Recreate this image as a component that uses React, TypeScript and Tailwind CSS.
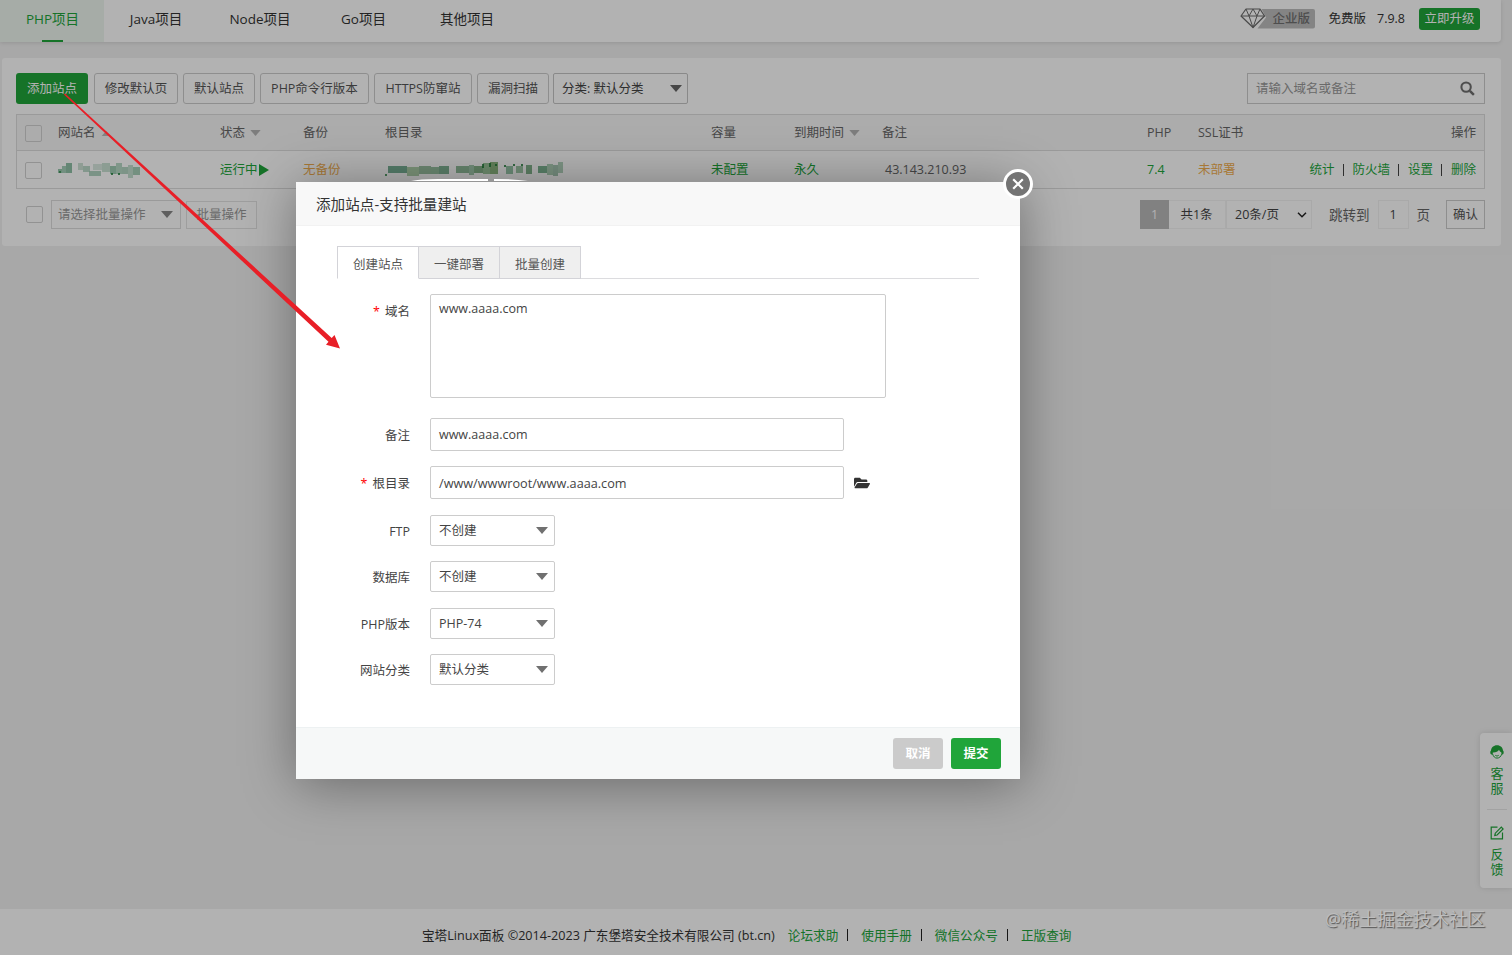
import React from 'react';
import { FaFolderOpen } from 'react-icons/fa';

const Caret = ({ className = '' }: { className?: string }) => (
  <svg viewBox="0 0 12 7" className={`h-[7px] w-3 shrink-0 ${className}`}>
    <path d="M0 0h12L6 7z" fill="currentColor" />
  </svg>
);

const Box = ({ className = '' }: { className?: string }) => (
  <span className={`block size-[17px] shrink-0 rounded-[2px] border border-[#d2d2d2] ${className}`} />
);

const nav = [
  { label: 'Java项目', width: 'w-[104px]' },
  { label: 'Node项目', width: 'w-[104px]' },
  { label: 'Go项目', width: 'w-[103px]' },
  { label: '其他项目', width: 'w-[104px]' },
];

const tools = [
  { label: '修改默认页', width: 'w-[84px] mr-[5px]' },
  { label: '默认站点', width: 'w-[72px] mr-[5px]' },
  { label: 'PHP命令行版本', width: 'w-[109px] mr-[5px]' },
  { label: 'HTTPS防窜站', width: 'w-[98px] mr-[5px]' },
  { label: '漏洞扫描', width: 'w-[72px] mr-[5px]' },
];

const columns = 'grid grid-cols-[41px_162px_83px_82px_326px_83px_88px_265px_51px_1fr_auto] items-center pt-px';

type Block = [number, number, number, number, string];

const nameBlocks: Block[] = [
  [0, 7, 4, 4, '#7fb99a'], [4, 4, 4, 7, '#8fc3a7'], [8, 1, 6, 10, '#74b291'], [20, 1, 5, 7, '#c0dacb'],
  [25, 4, 7, 6, '#abd0bb'], [31, 9, 12, 5, '#9cc8b0'], [35, 2, 9, 6, '#cfe3d8'], [44, 1, 8, 9, '#bcdac8'],
  [52, 4, 6, 8, '#86bd9f'], [58, 1, 6, 11, '#a5cfb7'], [64, 5, 6, 7, '#a0cbb3'], [70, 3, 5, 13, '#b4d6c3'],
  [75, 5, 7, 8, '#90c2a6'], [53, 11, 2, 2, '#1a7a34'], [60, 11, 2, 2, '#1a7a34'], [1, 9, 2, 2, '#2f8a4a'],
];

const pathBlocks: Block[] = [
  [0, 12, 2, 2, '#2f8a4a'], [3, 4, 19, 7, '#579f7d'], [22, 5, 12, 9, '#9ec898'], [34, 4, 12, 8, '#82b38b'],
  [46, 5, 8, 7, '#7fb48c'], [54, 4, 10, 8, '#63a27a'], [71, 4, 13, 7, '#76ae82'], [84, 3, 5, 10, '#8cbd9a'],
  [89, 4, 9, 7, '#6ba570'], [98, 1, 7, 11, '#83b984'], [105, 0, 8, 12, '#72a763'], [97, 2, 2, 4, '#1a7a34'],
  [104, 1, 2, 4, '#1a7a34'], [110, 2, 2, 2, '#1a7a34'], [119, 3, 2, 2, '#1a7a34'], [121, 4, 7, 8, '#80b995'],
  [131, 4, 7, 7, '#8abe94'], [128, 2, 2, 2, '#1a7a34'], [141, 3, 6, 9, '#66a273'], [136, 2, 2, 2, '#1a7a34'],
  [153, 4, 9, 7, '#5fa579'], [162, 2, 6, 11, '#9bc5a6'], [168, 3, 5, 11, '#92bba2'], [173, 0, 5, 11, '#a0c9ac'],
];

const Mosaic = ({ blocks, width }: { blocks: Block[]; width: number }) => (
  <svg width={width} height="17" viewBox={`0 0 ${width} 17`} className="block">
    {blocks.map(([x, y, w, h, fill], i) => (
      <rect key={i} x={x} y={y} width={w} height={h} fill={fill} opacity="0.8" />
    ))}
  </svg>
);

const Label = ({ text, required, className = '' }: { text: string; required?: boolean; className?: string }) => (
  <div className={`mr-5 flex w-[114px] shrink-0 items-center justify-end ${className}`}>
    {required && <span className="mr-[5px] text-[#f00]">*</span>}
    {text}
  </div>
);

const SelectRow = ({ label, value, className }: { label: string; value: string; className: string }) => (
  <div className={`flex h-[31px] ${className}`}>
    <Label text={label} className="pt-[3px]" />
    <div className="flex w-[125px] items-center justify-between rounded-[2px] border border-[#ccc] pr-[6px] pl-2">
      <span>{value}</span>
      <Caret className="text-[#707070]" />
    </div>
  </div>
);

const EnterpriseBadge = () => (
  <div className="relative mr-[13px] flex h-[21px] w-[75px] items-center">
    <svg viewBox="0 0 75 21" className="absolute inset-0 h-[21px] w-[75px]" fill="none" stroke="#6b6b6b" strokeWidth="1.200" strokeLinejoin="round">
      <path d="M17.500 20.500 26 9.500 21.500 1H73q2 0 2 2v15.500q0 2-2 2z" fill="#bdbdbd" stroke="none" />
      <path d="M6 1h14l4.500 7L13 19.500 1 8z" />
      <path d="M1 8h23.500M6 1l3 7 4 11.500M20 1l-3 7-4 11.500M9 8l4-7 4 7" strokeWidth="1" />
    </svg>
    <span className="relative pt-px pl-8 font-medium text-[#707070]">企业版</span>
  </div>
);

const Service = () => (
  <svg viewBox="0 0 14 14" className="size-[14px]">
    <path d="M7 .3C3.500.3 1.200 2.800 1 5.500 0 6 0 9 1.200 9.400h1.600V7.500c2.900.2 5.100-.9 6.200-2.700.6 1.400 1.400 2.400 2.400 2.700v1.900h1.400C14 9 14 6 13 5.500 12.800 2.800 10.500.3 7 .3z" fill="#20a53a" />
    <path d="M2.600 9c.8 2.600 2.300 4.100 4.400 4.100s4-1.400 4.600-3.900" stroke="#20a53a" strokeWidth="1" fill="none" />
    <path d="M5.300 10.300c1 .9 2.400.9 3.400 0" stroke="#20a53a" fill="none" />
  </svg>
);

const EditIcon = () => (
  <svg viewBox="0 0 14 14" className="size-[14px]" fill="none" stroke="#20a53a" strokeWidth="1.200">
    <path d="M7.500 1.200H1.200v11.600h11.300V6.500" />
    <path d="M4.800 9.500 5.300 7.200l6-6 1.800 1.800-6 6z" />
  </svg>
);

const Divider = () => <i className="mx-[8.500px] h-3 w-px bg-[#444]" />;
const FooterDivider = () => <i className="mr-[13px] ml-[9px] h-3 w-px bg-[#222]" />;

function Page() {
  return (
    <div className="flex h-full flex-col bg-[#f1f1f1]">
      <header className="mr-[11px] flex h-[42px] shrink-0 rounded-br-[4px] bg-white text-[13.500px] shadow-[0_1px_4px_rgba(0,0,0,0.12)]">
        <div className="flex w-[104px] flex-col items-center bg-[#eef6f0] text-[#20a53a]">
          <span className="flex h-10 items-center pb-[2px] pl-px">PHP项目</span>
          <span className="h-[2px] w-[21px] bg-[#20a53a]" />
        </div>
        {nav.map((n) => (
          <div key={n.label} className={`flex h-10 items-center justify-center pb-[2px] ${n.width}`}>{n.label}</div>
        ))}
        <div className="ml-auto flex h-[37px] items-center pr-[21px] text-[12.500px]">
          <EnterpriseBadge />
          <span className="mr-[11px] pt-px">免费版</span>
          <span className="mr-[14px] pt-px">7.9.8</span>
          <span className="flex h-[22px] w-[61px] items-center justify-center rounded-[3px] bg-[#20a53a] pt-px text-white">立即升级</span>
        </div>
      </header>

      <main className="mt-4 mr-[11px] ml-[2px] h-[188px] shrink-0 rounded-[3px] bg-white pt-[15px] pr-4 pl-[14px] text-[#666]">
        <div className="flex h-[31px]">
          <div className="mr-[6px] flex w-[72px] items-center justify-center rounded-[3px] bg-[#20a53a] pt-px text-white">添加站点</div>
          {tools.map((t) => (
            <div key={t.label} className={`flex items-center justify-center rounded-[3px] border border-[#ccc] pt-px text-[#555] ${t.width}`}>{t.label}</div>
          ))}
          <div className="-ml-px flex w-[135px] items-center justify-between rounded-[2px] border border-[#c4c4c4] pr-[5px] pl-2 text-[#444]">
            <span>分类: 默认分类</span>
            <Caret className="text-[#666]" />
          </div>
          <div className="ml-auto flex w-[238px] items-center justify-between border border-[#ccc] pr-[9px] pl-2 text-[#999]">
            <span>请输入域名或备注</span>
            <svg viewBox="0 0 16 16" className="size-[15px]" fill="none" stroke="#707070">
              <circle cx="6.500" cy="6.500" r="5" strokeWidth="2.200" />
              <path d="m10.500 10.500 4.300 4.300" strokeWidth="2.700" />
            </svg>
          </div>
        </div>

        <section className="mt-[10px] h-[75px] border border-[#ddd]">
          <div className={`h-[36px] border-b border-[#ddd] bg-[#f6f6f6] ${columns}`}>
            <Box className="ml-2" />
            <span className="flex items-center">网站名<Caret className="ml-[5px] !h-[5px] !w-[10px] rotate-180 text-[#bbb]" /></span>
            <span className="flex items-center">状态<Caret className="ml-[5px] !h-[6px] !w-[11px] text-[#b4b4b4]" /></span>
            <span>备份</span>
            <span>根目录</span>
            <span>容量</span>
            <span className="flex items-center">到期时间<Caret className="ml-[5px] !h-[6px] !w-[11px] text-[#b4b4b4]" /></span>
            <span>备注</span>
            <span>PHP</span>
            <span>SSL证书</span>
            <span className="pr-2">操作</span>
          </div>
          <div className={`h-[37px] text-[#20a53a] ${columns}`}>
            <Box className="ml-2" />
            <Mosaic blocks={nameBlocks} width={84} />
            <span className="flex items-center">运行中
              <svg viewBox="0 0 10 12" className="ml-px h-3 w-[10px]"><path d="M0 0v12l10-6z" fill="#20a53a" /></svg>
            </span>
            <span className="text-[#f0ad4e]">无备份</span>
            <Mosaic blocks={pathBlocks} width={180} />
            <span>未配置</span>
            <span>永久</span>
            <span className="pl-[3px] text-[#666]">43.143.210.93</span>
            <span>7.4</span>
            <span className="text-[#f0ad4e]">未部署</span>
            <div className="flex items-center pr-2">
              <span>统计</span><Divider />
              <span>防火墙</span><Divider />
              <span>设置</span><Divider />
              <span>删除</span>
            </div>
          </div>
        </section>

        <div className="mt-[11px] flex h-[29px] items-center">
          <Box className="mr-2 ml-[10px]" />
          <div className="mr-[5px] flex h-[29px] w-[130px] items-center justify-between border border-[#ddd] pr-[7px] pl-[6px] text-[#999]">
            <span>请选择批量操作</span><Caret className="text-[#888]" />
          </div>
          <div className="flex h-[28px] w-[71px] items-center justify-center border border-[#e2e2e2] text-[#999]">批量操作</div>
          <div className="ml-auto flex h-[29px] items-stretch text-[#444]">
            <span className="flex w-[29px] items-center justify-center bg-[#b9b9b9] text-white">1</span>
            <span className="flex w-[57px] items-center justify-center border-y border-r border-[#f4f4f4] pr-px">共1条</span>
            <span className="flex w-[86px] items-center justify-between border border-[#f2f2f2] pr-1 pl-2">20条/页
              <svg viewBox="0 0 10 6" className="h-[6px] w-[10px]"><path d="m1 .8 4 4 4-4" stroke="#222" strokeWidth="1.500" fill="none" /></svg>
            </span>
            <span className="flex items-center pr-2 pl-[17px] text-[13.500px] text-[#666]">跳转到</span>
            <span className="flex w-[31px] items-center justify-center border border-[#f2f2f2]">1</span>
            <span className="flex items-center px-2 text-[13.500px] text-[#666]">页</span>
            <span className="ml-2 flex w-[39px] items-center justify-center border border-[#ccc] text-[#555]">确认</span>
          </div>
        </div>
      </main>

      <footer className="mt-auto flex h-[46px] shrink-0 items-center bg-white pt-[6px] pl-[422px] text-[12.640px] text-[#333]">
        <span className="mr-[13px] whitespace-nowrap">宝塔Linux面板 ©2014-2023 广东堡塔安全技术有限公司 (bt.cn)</span>
        <span className="text-[#20a53a]">论坛求助</span><FooterDivider />
        <span className="text-[#20a53a]">使用手册</span><FooterDivider />
        <span className="text-[#20a53a]">微信公众号</span><FooterDivider />
        <span className="text-[#20a53a]">正版查询</span>
      </footer>

      <aside className="absolute top-[733px] right-0 flex h-[155px] w-8 flex-col items-center rounded-l-[4px] bg-white pt-3 pl-[2px] text-[13px] leading-[15px] text-[#20a53a] shadow-[0_0_6px_rgba(0,0,0,0.12)]">
        <Service />
        <span className="mt-[7px]">客</span>
        <span>服</span>
        <i className="mt-[13px] mb-4 h-px w-5 bg-[#e8e8e8]" />
        <EditIcon />
        <span className="mt-[7px]">反</span>
        <span>馈</span>
      </aside>
    </div>
  );
}

function Dialog() {
  return (
    <div className="absolute top-[182px] left-[296px] flex h-[597px] w-[724px] flex-col bg-white text-[#444] shadow-[1px_5px_50px_rgba(0,0,0,0.38)]">
      <div className="flex h-[44px] shrink-0 items-center border-b border-[#f2f2f2] bg-[#f8f8f8] pt-px pl-5 text-[14.600px] text-[#333]">添加站点-支持批量建站</div>
      <div className="mx-[41px] mt-5 flex h-[33px] shrink-0 text-[#555]">
        <div className="flex w-[82px] items-center justify-center border border-[#d3d3d8] border-b-white pt-1">创建站点</div>
        <div className="flex w-[81px] items-center justify-center border-y border-r border-[#d3d3d8] bg-[#efefef] pt-1">一键部署</div>
        <div className="flex w-[81px] items-center justify-center border-y border-r border-[#d3d3d8] bg-[#efefef] pt-1">批量创建</div>
        <div className="flex-1 border-b border-[#dcdcdf]" />
      </div>
      <div className="mt-[15px] flex h-[104px]">
        <Label text="域名" required className="h-[35px] pt-px" />
        <div className="w-[456px] rounded-[2px] border border-[#ccc] px-2 pt-[5px] leading-[18px]">www.aaaa.com</div>
      </div>
      <div className="mt-5 flex h-[33px]">
        <Label text="备注" className="pt-[2px]" />
        <div className="flex w-[414px] items-center rounded-[2px] border border-[#ccc] px-2">www.aaaa.com</div>
      </div>
      <div className="mt-[15px] flex h-[33px]">
        <Label text="根目录" required className="pt-[2px]" />
        <div className="mr-[10px] flex w-[414px] items-center rounded-[2px] border border-[#ccc] px-2 text-[12.680px]">/www/wwwroot/www.aaaa.com</div>
        <FaFolderOpen className="h-[34px] w-4 text-[#333]" />
      </div>
      <SelectRow label="FTP" value="不创建" className="mt-4" />
      <SelectRow label="数据库" value="不创建" className="mt-[15px]" />
      <SelectRow label="PHP版本" value="PHP-74" className="mt-4" />
      <SelectRow label="网站分类" value="默认分类" className="mt-[15px]" />
      <div className="mt-auto flex h-[52px] shrink-0 items-center justify-end gap-2 border-t border-[#edf1f2] bg-[#f6f8f8] pr-[19px] font-bold text-white">
        <span className="flex h-[31px] w-[50px] items-center justify-center rounded-[3px] bg-[#cbcbcb]">取消</span>
        <span className="flex h-[31px] w-[50px] items-center justify-center rounded-[3px] bg-[#20a53a]">提交</span>
      </div>
      <div className="absolute -top-[13px] -right-[13px] flex size-[30px] items-center justify-center rounded-full border-[3px] border-white bg-[#747474]">
        <svg viewBox="0 0 12 12" className="size-3"><path d="m1.200 1.200 9.600 9.600m0-9.600-9.600 9.600" stroke="#fff" strokeWidth="2.200" /></svg>
      </div>
    </div>
  );
}

export default function App() {
  return (
    <div className="relative h-[955px] w-[1512px] overflow-hidden font-['Open_Sans','Noto_Sans_CJK_SC',sans-serif] text-[12.500px] leading-[18px] text-[#333]">
      <Page />
      <div className="absolute inset-0 bg-black/30" />
      <Dialog />
      <svg className="pointer-events-none absolute inset-0" width="1512" height="955" viewBox="0 0 1512 955">
        <path d="M411 181q8-2 27-2h50v2zM494 181v-2q20 0 34 2z" fill="#fff" />
        <path d="M65.100 93.400 331.700 338 334.500 335 340 348.500 326 344.800 328.500 341.800 63.900 94.600z" fill="#e81f27" />
      </svg>
      <div className="absolute top-[905px] left-[1325px] text-[18px] leading-7 whitespace-nowrap text-[#bdbdbd] [text-shadow:1px_1px_1px_#555]">@稀土掘金技术社区</div>
    </div>
  );
}
